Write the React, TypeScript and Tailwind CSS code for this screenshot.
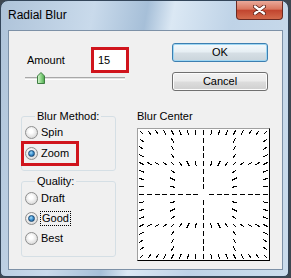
const font = "font-['Liberation_Sans',Arial,sans-serif]"

const Radio = ({ checked }: { checked?: boolean }) => (
    <span className="flex h-[13px] w-[13px] shrink-0 items-center justify-center rounded-full border border-[#8e8f8f] bg-[radial-gradient(circle_at_45%_40%,#ffffff_20%,#e4e4e4_60%,#c8c8c8_100%)]">
        {checked && (
            <span className="h-[7px] w-[7px] rounded-full border border-[#1b4a73] bg-[radial-gradient(circle_at_40%_35%,#a6dcf8_0%,#3a8fd0_50%,#17497a_100%)]" />
        )}
    </span>
)

const RadioRow = ({ label, checked, focused }: { label: string; checked?: boolean; focused?: boolean }) => (
    <div className="flex h-[20px] items-center gap-[3px]">
        <Radio checked={checked} />
        <span className={focused ? "px-[1px] leading-[13px] outline outline-1 outline-dotted outline-black" : "leading-[13px]"}>
            {label}
        </span>
    </div>
)

const BlurCenter = () => {
    const lines = [3.5, 34.5, 65.5, 96.5, 127.5]
    const c = 65.5
    const seen = new Set<string>()
    const marks: { x1: number; y1: number; x2: number; y2: number }[] = []
    lines.forEach((a) => {
        for (let i = 0; i <= 16; i++) {
            const t = 3.5 + 7.75 * i
            ;[
                [a, t],
                [t, a],
            ].forEach(([x, y]) => {
                const key = `${x}-${y}`
                if (seen.has(key)) return
                seen.add(key)
                const dx = x - c
                const dy = y - c
                const len = Math.hypot(dx, dy)
                if (len === 0) return
                const ux = (dx / len) * 2.5
                const uy = (dy / len) * 2.5
                marks.push({ x1: x - ux, y1: y - uy, x2: x + ux, y2: y + uy })
            })
        }
    })
    return (
        <div className="h-[133px] w-[133px] border border-b-black border-l-[#a0a0a0] border-r-black border-t-[#a0a0a0] bg-white">
            <svg width="131" height="131" viewBox="0 0 131 131" shapeRendering="crispEdges">
                {marks.map((m, i) => (
                    <line key={i} x1={m.x1} y1={m.y1} x2={m.x2} y2={m.y2} stroke="#000" strokeWidth="1" />
                ))}
            </svg>
        </div>
    )
}

const App = () => {
    return (
        <div className={`h-[278px] w-[291px] bg-[#3e4751] ${font} text-[11px] text-black`}>
            <div className="flex h-[277px] w-[289px] flex-col overflow-hidden rounded-b-[5px] rounded-t-[8px] border border-[#34465a] bg-[linear-gradient(100deg,#aec3d9_0%,#c9daeb_28%,#a6bfd8_44%,#dbe8f4_52%,#bfd3e7_70%,#cbdcec_100%)]">
                <div className="flex h-[29px] shrink-0 items-start justify-between">
                    <span className="pl-[7px] pt-[7px] text-[12px] leading-[15px]">Radial Blur</span>
                    <div className="mr-[5px] flex h-[19px] w-[47px] items-center justify-center rounded-b-[4px] border border-t-0 border-[#6b2a22] bg-[linear-gradient(to_bottom,#e9a99a_0%,#d9775f_45%,#c2452f_52%,#d36a4c_100%)]">
                        <svg width="13" height="10" viewBox="0 0 13 10">
                            <path d="M2 1.5 L11 8.5 M11 1.5 L2 8.5" stroke="#5a1f16" strokeWidth="4" strokeLinecap="round" />
                            <path d="M2 1.5 L11 8.5 M11 1.5 L2 8.5" stroke="#ffffff" strokeWidth="2.4" strokeLinecap="round" />
                        </svg>
                    </div>
                </div>

                <div className="ml-[7px] h-[240px] w-[275px] shrink-0 border border-[#7d91a7] bg-[#f0f0f0]">
                    <div className="flex h-[60px]">
                        <div className="ml-[16px] mt-[16px] w-[104px]">
                            <div className="flex h-[26px] items-center">
                                <span className="ml-[2px] w-[64px]">Amount</span>
                                <div className="flex h-[26px] w-[38px] items-center border-[3px] border-[#d0141c] bg-white pl-[4px]">
                                    15
                                </div>
                            </div>
                            <div className="relative h-[10px] w-[100px]">
                                <div className="absolute left-0 right-0 top-[4px] h-[3px] border-b border-t border-b-white border-t-[#a8a8a8] bg-[#e2e2e2]" />
                                <svg className="absolute left-[12px] top-[-1px]" width="8" height="12" viewBox="0 0 8 12">
                                    <defs>
                                        <linearGradient id="thumb" x1="0" y1="0" x2="1" y2="0">
                                            <stop offset="0" stopColor="#d9f5d2" />
                                            <stop offset="0.5" stopColor="#8fd68a" />
                                            <stop offset="1" stopColor="#4ba84b" />
                                        </linearGradient>
                                    </defs>
                                    <path d="M4 0.5 L7.5 4 V11.5 H0.5 V4 Z" fill="url(#thumb)" stroke="#3f7d43" strokeWidth="1" />
                                </svg>
                            </div>
                        </div>
                        <div className="ml-auto mr-[14px] mt-[12px] flex flex-col gap-[10px]">
                            <div className="flex h-[19px] w-[96px] items-center justify-center rounded-[3px] border border-[#3c7fb1] bg-[linear-gradient(to_bottom,#f4f9fc_0%,#e6eef3_48%,#d6dfe5_52%,#cad4db_100%)] shadow-[inset_0_0_0_1px_#9fd6f2]">
                                OK
                            </div>
                            <div className="flex h-[19px] w-[96px] items-center justify-center rounded-[3px] border border-[#707070] bg-[linear-gradient(to_bottom,#f2f2f2_0%,#ebebeb_48%,#dddddd_52%,#cfcfcf_100%)] shadow-[inset_0_0_0_1px_#fcfcfc]">
                                Cancel
                            </div>
                        </div>
                    </div>

                    <div className="mt-[19px] flex">
                        <div className="ml-[12px] flex w-[95px] flex-col gap-[4px]">
                            <fieldset className="rounded-[3px] border border-[#d5dfe5] pb-[4px] pl-[3px]">
                                <legend className="ml-[10px] px-[2px] leading-[13px]">Blur Method:</legend>
                                <div className="flex h-[18px] items-center gap-[3px]">
                                    <Radio />
                                    <span className="leading-[13px]">Spin</span>
                                </div>
                                <div className="-ml-[4px] flex h-[25px] w-[58px] items-center gap-[3px] border-[3px] border-[#d0141c] pl-[1px]">
                                    <Radio checked />
                                    <span className="leading-[13px]">Zoom</span>
                                </div>
                            </fieldset>
                            <fieldset className="rounded-[3px] border border-[#d5dfe5] pb-[8px] pl-[3px]">
                                <legend className="ml-[10px] px-[2px] leading-[13px]">Quality:</legend>
                                <RadioRow label="Draft" />
                                <RadioRow label="Good" checked focused />
                                <RadioRow label="Best" />
                            </fieldset>
                        </div>
                        <div className="ml-[21px] flex flex-col">
                            <span className="leading-[13px]">Blur Center</span>
                            <div className="mt-[5px]">
                                <BlurCenter />
                            </div>
                        </div>
                    </div>
                </div>
            </div>
        </div>
    )
}

export default App
